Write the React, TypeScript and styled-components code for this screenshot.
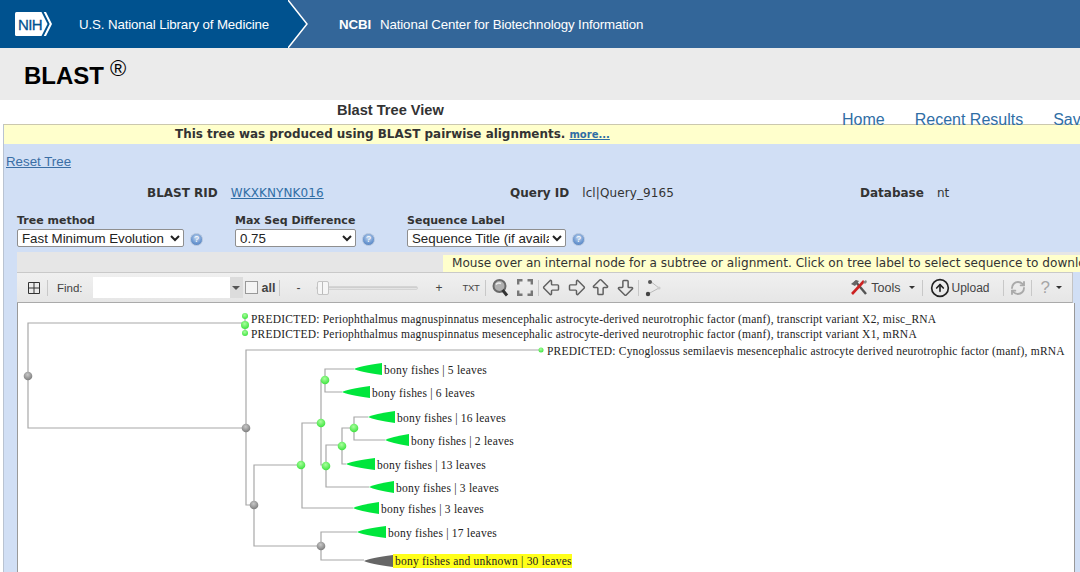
import React from "react";
import styled, { createGlobalStyle } from "styled-components";
import { ArrowBigLeft, ArrowBigRight, ArrowBigUp, ArrowBigDown, CircleArrowUp, RefreshCw } from "lucide-react";

const Global = createGlobalStyle`
  html, body { margin: 0; padding: 0; background: #fff; overflow: hidden; }
  body { font-family: "Liberation Sans", Arial, sans-serif; }
`;

const Page = styled.div`
  position: relative;
  width: 1080px;
  height: 572px;
  overflow: hidden;
`;

const Banner = styled.header`
  display: flex;
  align-items: center;
  height: 48px;
  background: #336699;
  color: #fff;
  font-size: 14px;
`;
const BannerLeft = styled.div`
  display: flex;
  align-items: center;
  width: 288px;
  height: 100%;
  padding-left: 15px;
  box-sizing: border-box;
  background: #00528f;
`;
const LibraryName = styled.span`
  margin-left: 27px;
  font-size: 13.3px;
  white-space: nowrap;
  letter-spacing: -0.13px;
`;
const NcbiName = styled.span`
  margin-left: 29px;
  font-size: 13.3px;
  white-space: nowrap;
  letter-spacing: -0.13px;
  b { margin-right: 9px; }
`;

const TitleBar = styled.div`
  height: 52px;
  background: #ebebeb;
  padding-left: 24px;
  box-sizing: border-box;
  color: #000;
  font-weight: bold;
  font-size: 24px;
  line-height: 55px;
  sup {
    font-weight: normal;
    font-size: 22px;
    line-height: 0;
    position: relative;
    top: 1px;
    vertical-align: super;
    margin-left: 6px;
  }
`;

const ViewTitle = styled.div`
  height: 24px;
  padding-left: 337px;
  box-sizing: border-box;
  font-size: 14.6px;
  line-height: 21px;
  font-weight: bold;
  color: #333;
`;

const NavLinks = styled.nav`
  position: absolute;
  top: 111px;
  left: 842px;
  display: flex;
  gap: 30px;
  z-index: 2;
  white-space: nowrap;
`;
const NavLink = styled.a`
  font-size: 16px;
  line-height: 18px;
  color: #2f6ea5;
`;

const Panel = styled.section`
  margin-left: 3px;
  width: 1077px;
  height: 448px;
  box-sizing: border-box;
  border-top: 1px solid #cbc8ae;
  border-left: 1px solid #b9c3d2;
  background: #d1dff5;
`;
const Notice = styled.div`
  height: 19px;
  background: #ffffcc;
  padding-left: 171px;
  font-family: "DejaVu Sans", Verdana, sans-serif;
  font-size: 11.95px;
  font-weight: bold;
  line-height: 19px;
  color: #333;
  white-space: nowrap;
  a { color: #2f6ea5; font-size: 10px; margin-left: 0; text-decoration: underline; font-weight: bold; }
`;
const ResetLink = styled.a`
  display: block;
  margin: 9px 0 0 2px;
  font-size: 13.3px;
  line-height: 17px;
  color: #3a6ea5;
  text-decoration: underline;
`;
const InfoRow = styled.div`
  display: flex;
  margin-top: 15px;
  padding-left: 143px;
  height: 16px;
  align-items: center;
  font-family: "DejaVu Sans", Verdana, sans-serif;
  font-size: 12px;
  color: #333;
  white-space: nowrap;
`;
const InfoItem = styled.div<{ $w: number }>`
  display: flex;
  gap: 13px;
  width: ${(p) => p.$w}px;
  flex: none;
  b { font-weight: bold; }
  span, a { letter-spacing: 0.1px; }
  a { color: #2f6ea5; text-decoration: underline; }
`;

const Controls = styled.div`
  display: flex;
  margin-top: 12px;
  padding-left: 13px;
`;
const Control = styled.div<{ $w: number }>`
  width: ${(p) => p.$w}px;
  flex: none;
`;
const ControlLabel = styled.div`
  font-family: "DejaVu Sans", Verdana, sans-serif;
  font-size: 11px;
  font-weight: bold;
  line-height: 15px;
  margin-bottom: 1px;
  color: #333;
`;
const ControlBody = styled.div`
  display: flex;
  align-items: center;
  gap: 6px;
`;
const Picker = styled.select<{ $w: number }>`
  width: ${(p) => p.$w}px;
  height: 18px;
  padding: 0;
  box-sizing: border-box;
  font-family: "Liberation Sans", Arial, sans-serif;
  font-size: 13.3px;
  color: #222;
  background: #fff;
  border: 1px solid #8f8f8f;
  border-radius: 2px;
`;
const HelpDot = styled.span`
  display: inline-block;
  width: 13px;
  height: 13px;
  margin-top: 2px;
  border-radius: 50%;
  background: radial-gradient(circle at 50% 35%, #c6d8f0 0%, #6f9ad2 55%, #4a78b8 100%);
  border: 1px solid #b3c4dc;
  box-sizing: border-box;
  color: #fff;
  font-size: 9px;
  line-height: 11px;
  text-align: center;
`;

const HintBand = styled.div`
  margin: 5px 0 0 13px;
  height: 20px;
  background: #e6e6e6;
  display: flex;
  justify-content: flex-end;
  align-items: flex-end;
`;
const Hint = styled.div`
  flex: none;
  width: 637px;
  height: 17px;
  box-sizing: border-box;
  padding-left: 9px;
  background: #ffffcc;
  font-family: "DejaVu Sans", Verdana, sans-serif;
  font-size: 12.1px;
  line-height: 17px;
  color: #333;
  white-space: nowrap;
  overflow: hidden;
`;

const TreeFrame = styled.div`
  margin-left: 13px;
  width: 1058px;
  box-sizing: border-box;
`;
const Toolbar = styled.div`
  display: flex;
  align-items: center;
  justify-content: space-between;
  height: 31px;
  margin-right: 2px;
  padding: 0 10px 0 10px;
  box-sizing: border-box;
  background: linear-gradient(#f0f0f0, #e6e6e6);
  border-top: 1px solid #c9c9c9;
  border-bottom: 1px solid #aaa;
  border-right: 1px solid #c4c4c4;
  color: #444;
  font-size: 12px;
`;
const ToolGroup = styled.div`
  display: flex;
  align-items: center;
`;
const Sep = styled.span<{ $l?: number }>`
  width: 1px;
  height: 16px;
  background: #c8c8c8;
  margin-left: ${(p) => p.$l ?? 0}px;
  flex: none;
`;
const Item = styled.span<{ $l?: number; $b?: boolean; $size?: number; $track?: number }>`
  margin-left: ${(p) => p.$l ?? 0}px;
  font-weight: ${(p) => (p.$b ? "bold" : "normal")};
  font-size: ${(p) => p.$size ?? 12}px;
  letter-spacing: ${(p) => p.$track ?? 0}px;
  display: inline-flex;
  align-items: center;
  white-space: nowrap;
  flex: none;
`;
const FaintMark = styled.span`
  color: #777;
  opacity: 0.6;
`;
const FindBox = styled.div`
  display: flex;
  align-items: center;
  width: 150px;
  height: 21px;
  margin-left: 10px;
  background: linear-gradient(90deg, #fff 137px, #dcdcdc 137px);
`;
const FindInput = styled.input`
  width: 137px;
  height: 100%;
  border: 0;
  padding: 0;
  background: transparent;
  outline: none;
`;
const Check = styled.span`
  width: 13px;
  height: 13px;
  margin-left: 2px;
  border: 1px solid #999;
  background: #f4f4f4;
  box-sizing: border-box;
  flex: none;
`;
const SliderTrack = styled.div`
  position: relative;
  width: 102px;
  height: 4px;
  margin-left: 16px;
  border-radius: 2px;
  background: linear-gradient(#c4c4c4, #eee);
  border: 1px solid #d4d4d4;
  box-sizing: border-box;
`;
const SliderThumb = styled.span`
  position: absolute;
  left: 0;
  top: -6px;
  width: 12px;
  height: 14px;
  border: 1px solid #c4c4c4;
  border-radius: 2px;
  background: linear-gradient(90deg, #f6f6f6 45%, #bbb 45%, #bbb 55%, #f6f6f6 55%);
  box-sizing: border-box;
`;
const Caret = styled.span<{ $l?: number; $c?: string; $s?: number }>`
  width: 0;
  height: 0;
  margin-left: ${(p) => p.$l ?? 0}px;
  border-left: ${(p) => p.$s ?? 3}px solid transparent;
  border-right: ${(p) => p.$s ?? 3}px solid transparent;
  border-top: ${(p) => p.$s ?? 3}px solid ${(p) => p.$c ?? "#333"};
  flex: none;
`;
const IconSlot = styled.span<{ $l?: number }>`
  display: inline-flex;
  margin-left: ${(p) => p.$l ?? 0}px;
  flex: none;
`;
const TreeBox = styled.div`
  height: 269px;
  background: #fff;
  border-left: 1px solid #999;
  border-right: 1px solid #999;
  box-sizing: border-box;
  overflow: hidden;
  svg { display: block; }
`;

const Line = ({ d }: { d: string }) => <path d={d} fill="none" stroke="#a8a8a8" strokeWidth={1.2} />;
const Node = ({ x, y, r = 4.3, gray }: { x: number; y: number; r?: number; gray?: boolean }) => (
  <circle cx={x} cy={y} r={r} fill={gray ? "url(#nodeGray)" : "url(#nodeGreen)"} />
);
const Wedge = ({ tip, base, y, c = "#00e63c" }: { tip: number; base: number; y: number; c?: string }) => (
  <path d={`M${tip} ${y}Q${tip + 6} ${y - 3} ${base} ${y - 6}V${y + 6}Q${tip + 6} ${y + 3} ${tip} ${y}Z`} fill={c} />
);
const Label = ({ x, y, children }: { x: number; y: number; children: React.ReactNode }) => (
  <text x={x} y={y} fontFamily='"Liberation Serif", "Times New Roman", serif' fontSize={11.5} fill="#222" letterSpacing={0.22}>
    {children}
  </text>
);

const leaves: [number, number, number, string][] = [
  [354, 382, 369, "bony fishes | 5 leaves"],
  [342, 370, 392, "bony fishes | 6 leaves"],
  [368, 395, 417, "bony fishes | 16 leaves"],
  [385, 409, 440, "bony fishes | 2 leaves"],
  [346, 375, 464, "bony fishes | 13 leaves"],
  [369, 394, 487, "bony fishes | 3 leaves"],
  [353, 379, 508, "bony fishes | 3 leaves"],
  [357, 386, 532, "bony fishes | 17 leaves"],
];

const Tree = () => (
  <svg width={1056} height={269} viewBox="18 303 1056 269">
    <defs>
      <radialGradient id="nodeGreen" cx="45%" cy="35%" r="70%">
        <stop offset="0%" stopColor="#a8ff9c" />
        <stop offset="100%" stopColor="#35e038" />
      </radialGradient>
      <radialGradient id="nodeGray" cx="45%" cy="35%" r="70%">
        <stop offset="0%" stopColor="#c8c8c8" />
        <stop offset="100%" stopColor="#777" />
      </radialGradient>
    </defs>
    <Line d="M245 323H28V428H245" />
    <Line d="M245 316V333" />
    <Line d="M541 350H246V505H254" />
    <Line d="M302 465H254V546H321" />
    <Line d="M353 508H302V423H321" />
    <Line d="M325 380H321V465H326" />
    <Line d="M354 369H325V392H342" />
    <Line d="M369 487H326V445H342" />
    <Line d="M346 464H342V428H354" />
    <Line d="M368 417H354V440H385" />
    <Line d="M357 532H321V560H364" />
    {leaves.map(([tip, base, y, text]) => (
      <g key={`${y}`}>
        <Wedge tip={tip} base={base} y={y} />
        <Label x={base + 2} y={y + 5}>{text}</Label>
      </g>
    ))}
    <Wedge tip={364} base={393} y={561} c="#666" />
    <rect x={393} y={554} width={179} height={14} fill="#ffff1a" />
    <Label x={395} y={565}>bony fishes and unknown | 30 leaves</Label>
    <Label x={251} y={323}>PREDICTED: Periophthalmus magnuspinnatus mesencephalic astrocyte-derived neurotrophic factor (manf), transcript variant X2, misc_RNA</Label>
    <Label x={251} y={338}>PREDICTED: Periophthalmus magnuspinnatus mesencephalic astrocyte-derived neurotrophic factor (manf), transcript variant X1, mRNA</Label>
    <Label x={547} y={355}>PREDICTED: Cynoglossus semilaevis mesencephalic astrocyte derived neurotrophic factor (manf), mRNA</Label>
    <Node x={245} y={316} r={3} />
    <Node x={245} y={325} r={4} />
    <Node x={245} y={333} r={3} />
    <Node x={541} y={350} r={2.5} />
    <Node x={28} y={376} gray />
    <Node x={246} y={428} gray />
    <Node x={254} y={505} gray />
    <Node x={321} y={546} gray />
    <Node x={301} y={465} />
    <Node x={321} y={423} />
    <Node x={325} y={380} />
    <Node x={326} y={466} />
    <Node x={342} y={446} />
    <Node x={354} y={428} />
  </svg>
);

const NihLogo = () => (
  <svg width={37} height={24} viewBox="0 0 37 24">
    <path d="M1.5 0H26.5L32.5 12L26.5 24H1.5Q0 24 0 22.5V1.5Q0 0 1.5 0Z" fill="#fff" />
    <path d="M31 0L37 12L31 24H28.7L34.7 12L28.7 0Z" fill="#fff" />
    <text x={3} y={17.5} fontFamily='"Liberation Sans", Arial, sans-serif' fontSize={15} fill="#00528f" stroke="#00528f" strokeWidth={0.3} letterSpacing={-0.6}>NIH</text>
  </svg>
);
const ChevronSvg = styled.svg`
  flex: none;
`;
const BannerChevron = () => (
  <ChevronSvg width={22} height={48} viewBox="0 0 22 48">
    <path d="M0 0L19 24L0 48Z" fill="#00528f" />
    <path d="M0 0L19 24L0 48" fill="none" stroke="#fff" strokeWidth={1.5} />
  </ChevronSvg>
);
const TreeToggle = () => (
  <svg width={14} height={14} viewBox="0 0 14 14">
    <path d="M1.5 1.5H12.5V12.5H1.5ZM7 1.5V12.5M1.5 7H12.5" fill="none" stroke="#333" />
  </svg>
);
const SearchIcon = () => (
  <svg width={17} height={18} viewBox="0 0 17 18">
    <circle cx={7.5} cy={7} r={6} fill="#b0b0b0" stroke="#6a6a6a" strokeWidth={2} />
    <path d="M4 5.5Q6 3 9 4.5" stroke="#eee" strokeWidth={1.5} fill="none" />
    <path d="M10.5 11L15 16.5" stroke="#333" strokeWidth={3} />
  </svg>
);
const FullscreenIcon = () => (
  <svg width={16} height={17} viewBox="0 0 16 17">
    <path d="M1.2 5.5V1.2H5.5M10.5 1.2H14.8V5.5M14.8 11.5V15.8H10.5M5.5 15.8H1.2V11.5" fill="none" stroke="#777" strokeWidth={2.4} />
  </svg>
);
const ShareIcon = () => (
  <svg width={16} height={18} viewBox="0 0 16 18">
    <path d="M5 2L14 9L3 15" fill="none" stroke="#bbb" />
    <circle cx={5} cy={3} r={2} fill="#555" />
    <circle cx={3} cy={15} r={2.2} fill="#444" />
    <circle cx={14} cy={9} r={1.6} fill="#ccc" />
  </svg>
);
const ToolsIcon = () => (
  <svg width={18} height={18} viewBox="0 0 18 18">
    <path d="M5 2L16 15" stroke="#555" strokeWidth={2.4} />
    <path d="M1 5L6 1L9 2L5 7Z" fill="#666" />
    <path d="M14 2L2 15" stroke="#c22" strokeWidth={2.6} />
    <path d="M13 3L16 1L17 3L15 5Z" fill="#888" />
  </svg>
);

const App = () => (
  <Page>
    <Global />
    <Banner>
      <BannerLeft>
        <NihLogo />
        <LibraryName>U.S. National Library of Medicine</LibraryName>
      </BannerLeft>
      <BannerChevron />
      <NcbiName><b>NCBI</b>National Center for Biotechnology Information</NcbiName>
    </Banner>
    <TitleBar>BLAST<sup>®</sup></TitleBar>
    <ViewTitle>Blast Tree View</ViewTitle>
    <NavLinks>
      <NavLink>Home</NavLink>
      <NavLink>Recent Results</NavLink>
      <NavLink>Saved Strategies</NavLink>
    </NavLinks>
    <Panel>
      <Notice>This tree was produced using BLAST pairwise alignments. <a>more...</a></Notice>
      <ResetLink>Reset Tree</ResetLink>
      <InfoRow>
        <InfoItem $w={363}><b>BLAST RID</b><a>WKXKNYNK016</a></InfoItem>
        <InfoItem $w={350}><b>Query ID</b><span>lcl|Query_9165</span></InfoItem>
        <InfoItem $w={200}><b>Database</b><span>nt</span></InfoItem>
      </InfoRow>
      <Controls>
        <Control $w={218}>
          <ControlLabel>Tree method</ControlLabel>
          <ControlBody>
            <Picker $w={167}><option>Fast Minimum Evolution</option></Picker>
            <HelpDot>?</HelpDot>
          </ControlBody>
        </Control>
        <Control $w={172}>
          <ControlLabel>Max Seq Difference</ControlLabel>
          <ControlBody>
            <Picker $w={121}><option>0.75</option></Picker>
            <HelpDot>?</HelpDot>
          </ControlBody>
        </Control>
        <Control $w={200}>
          <ControlLabel>Sequence Label</ControlLabel>
          <ControlBody>
            <Picker $w={159}><option>Sequence Title (if available)</option></Picker>
            <HelpDot>?</HelpDot>
          </ControlBody>
        </Control>
      </Controls>
      <HintBand>
        <Hint>Mouse over an internal node for a subtree or alignment. Click on tree label to select sequence to download.</Hint>
      </HintBand>
      <TreeFrame>
        <Toolbar>
          <ToolGroup>
            <TreeToggle />
            <Sep $l={6} />
            <Item $l={9} $size={11.5}>Find:</Item>
            <FindBox><FindInput /><Caret $l={2} $c="#555" $s={4} /></FindBox>
            <Check />
            <Item $l={4} $b $size={12.5}>all</Item>
            <Sep $l={4} />
            <Item $l={16}>-</Item>
            <SliderTrack><SliderThumb /></SliderTrack>
            <Item $l={17}>+</Item>
            <Item $l={20} $size={9.5} $track={-0.3}>TXT</Item>
            <Sep $l={5} />
            <IconSlot $l={6}><SearchIcon /></IconSlot>
            <IconSlot $l={8}><FullscreenIcon /></IconSlot>
            <Sep $l={5} />
            <IconSlot $l={2}><ArrowBigLeft size={21} color="#606060" strokeWidth={1.7} /></IconSlot>
            <IconSlot $l={4}><ArrowBigRight size={21} color="#606060" strokeWidth={1.7} /></IconSlot>
            <IconSlot $l={3}><ArrowBigUp size={21} color="#606060" strokeWidth={1.7} /></IconSlot>
            <IconSlot $l={4}><ArrowBigDown size={21} color="#606060" strokeWidth={1.7} /></IconSlot>
            <Sep $l={2} />
            <IconSlot $l={6}><ShareIcon /></IconSlot>
          </ToolGroup>
          <ToolGroup>
            <ToolsIcon />
            <Item $l={3} $size={12.5}>Tools</Item>
            <Caret $l={8} />
            <Sep $l={7} />
            <IconSlot $l={7}><CircleArrowUp size={20} color="#222" strokeWidth={2} /></IconSlot>
            <Item $l={2}>Upload</Item>
            <Sep $l={13} />
            <IconSlot $l={6}><RefreshCw size={16} color="#aaa" strokeWidth={2.8} /></IconSlot>
            <Sep $l={5} />
            <Item $l={9} $size={17}><FaintMark>?</FaintMark></Item>
            <Caret $l={6} />
          </ToolGroup>
        </Toolbar>
        <TreeBox><Tree /></TreeBox>
      </TreeFrame>
    </Panel>
  </Page>
);

export default App;
